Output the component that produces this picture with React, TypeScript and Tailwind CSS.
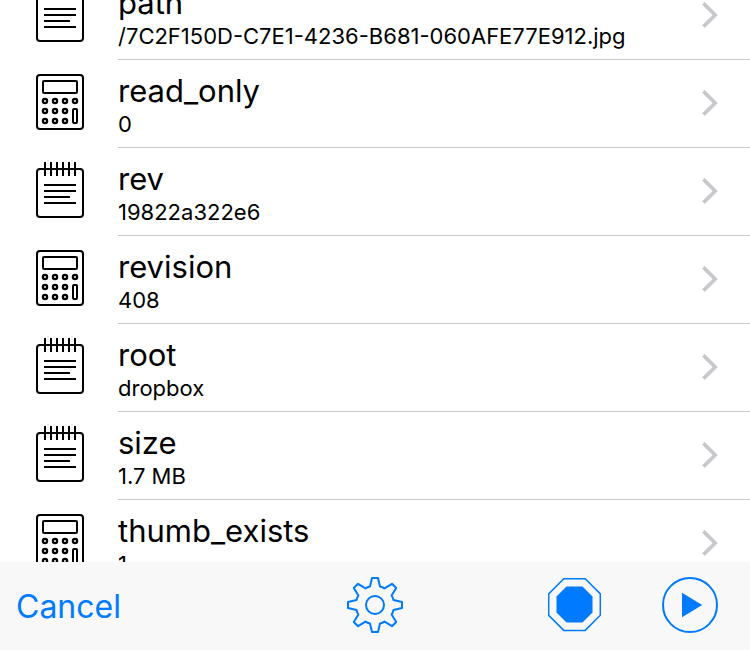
type Field = {
  name: string;
  value: string;
  kind: "text" | "number";
};

const fields: Field[] = [
  { name: "path", value: "/7C2F150D-C7E1-4236-B681-060AFE77E912.jpg", kind: "text" },
  { name: "read_only", value: "0", kind: "number" },
  { name: "rev", value: "19822a322e6", kind: "text" },
  { name: "revision", value: "408", kind: "number" },
  { name: "root", value: "dropbox", kind: "text" },
  { name: "size", value: "1.7 MB", kind: "text" },
  { name: "thumb_exists", value: "1", kind: "number" }
];

const keys = [
  [9, 27], [19, 27], [29, 27], [39, 27],
  [9, 37], [19, 37], [29, 37],
  [9, 47], [19, 47], [29, 47]
];

function CalculatorIcon() {
  return (
    <svg width="48" height="56" viewBox="0 0 48 56" fill="none" stroke="currentColor" strokeWidth="2" aria-hidden="true">
      <rect x="1" y="1" width="46" height="54" rx="3" />
      <rect x="7" y="7" width="34" height="12" rx="1" />
      {keys.map(([x, y]) => (
        <circle key={`${x}-${y}`} cx={x} cy={y} r="2.1" strokeWidth="2.3" />
      ))}
      <rect x="37" y="35" width="4" height="14" rx="1" />
    </svg>
  );
}

function NotepadIcon() {
  return (
    <svg width="48" height="56" viewBox="0 0 48 56" fill="none" stroke="currentColor" strokeWidth="2" aria-hidden="true">
      <rect x="1" y="7" width="46" height="48" rx="3" />
      <path d="M9 0v14M15 0v14M21 0v14M27 0v14M33 0v14M39 0v14" />
      <path d="M8 23h32M8 29h32M8 35h26M8 41h32" />
    </svg>
  );
}

function Chevron() {
  return (
    <svg className="mt-7.5 shrink-0" width="16" height="26" viewBox="0 0 16 26" fill="none" stroke="#c7c7cc" strokeWidth="3.6" aria-hidden="true">
      <path d="M1.4 1.4 13.2 13 1.4 24.6" />
    </svg>
  );
}

function GearIcon() {
  return (
    <svg width="56" height="56" viewBox="-28 -28 56 56" fill="none" stroke="currentColor" strokeWidth="2" strokeLinejoin="round" aria-hidden="true">
      <path d="M-5-18.5-3-27H3L5-18.5Q7.5-18 9.5-16.6L17-21.2 21.2-17 16.6-9.5Q18-7.5 18.5-5L27-3V3L18.5 5Q18 7.5 16.6 9.5L21.2 17 17 21.2 9.5 16.6Q7.5 18 5 18.5L3 27H-3L-5 18.5Q-7.5 18-9.5 16.6L-17 21.2-21.2 17-16.6 9.5Q-18 7.5-18.5 5L-27 3V-3L-18.5-5Q-18-7.5-16.6-9.5L-21.2-17-17-21.2-9.5-16.6Q-7.5-18-5-18.5Z" />
      <circle r="9" />
    </svg>
  );
}

function StopIcon() {
  return (
    <svg width="54" height="54" viewBox="-27 -27 54 54" aria-hidden="true">
      <path d="M-11.2-26.2H10.2L25.3-11.1V10.3L10.2 25.4H-11.2L-26.3 10.3V-11.1Z" fill="none" stroke="currentColor" strokeWidth="1.5" />
      <path d="M-8.5-18.4H7.5L17.5-8.4V7.6L7.5 17.6H-8.5L-18.5 7.6V-8.4Z" fill="currentColor" />
    </svg>
  );
}

function PlayIcon() {
  return (
    <svg width="56" height="56" viewBox="-28 -28 56 56" aria-hidden="true">
      <circle r="27" fill="none" stroke="currentColor" strokeWidth="2" />
      <path d="M-8-12.2 12.2 0-8 12.2Z" fill="currentColor" />
    </svg>
  );
}

function FieldRow({ name, value, kind }: Field) {
  return (
    <li>
      <a href={`#${name}`} className="flex h-22 pl-9">
        <span className="w-20.5 shrink-0 pt-3.5">{kind === "number" ? <CalculatorIcon /> : <NotepadIcon />}</span>
        <span className="flex min-w-0 flex-1 items-start justify-between border-b border-[#c8c7cc] pr-8">
          <span className="min-w-0 pt-3">
            <span className="block text-[31px] leading-[38px]">{name}</span>
            <span className="block truncate text-[22px] leading-7">{value}</span>
          </span>
          <Chevron />
        </span>
      </a>
    </li>
  );
}

export default function App() {
  return (
    <div className="flex h-screen flex-col overflow-hidden bg-white font-[Inter,sans-serif] text-black">
      <main className="min-h-0 flex-1 overflow-hidden">
        {/* list is scrolled part way past the first row */}
        <ul className="-mt-7">
          {fields.map((field) => (
            <FieldRow key={field.name} {...field} />
          ))}
        </ul>
      </main>
      <footer className="grid h-22 shrink-0 grid-cols-[1fr_auto_1fr] items-center bg-[#f8f8f8] pb-0.5 text-[#007aff]">
        <div className="pt-1 pl-4">
          <button type="button" className="block text-[32px] leading-10">Cancel</button>
        </div>
        <button type="button" aria-label="Settings"><GearIcon /></button>
        <div className="flex items-center justify-end gap-15 pr-8">
          <button type="button" aria-label="Stop"><StopIcon /></button>
          <button type="button" aria-label="Run"><PlayIcon /></button>
        </div>
      </footer>
    </div>
  );
}
